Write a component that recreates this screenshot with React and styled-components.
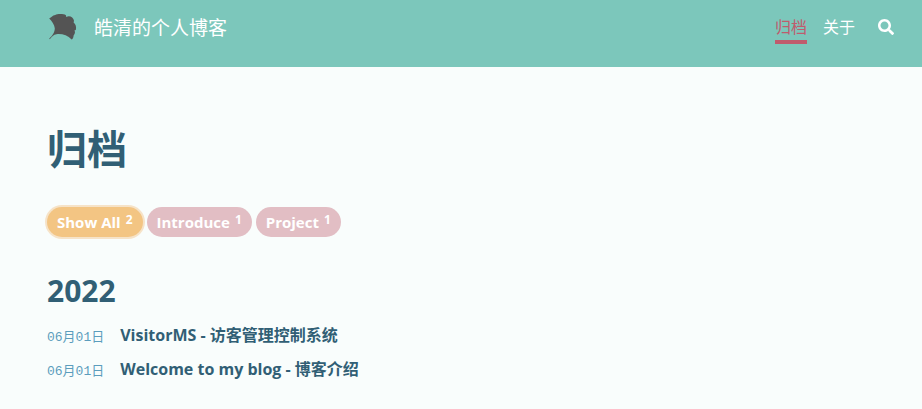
import React, { useState } from 'react';
import styled, { createGlobalStyle } from 'styled-components';
import { FaSearch } from 'react-icons/fa';

const GlobalStyle = createGlobalStyle`
  *, *::before, *::after { box-sizing: border-box; }
  body {
    margin: 0;
    background: #f9fdfc;
    color: #315f75;
    font-family: "Open Sans", "Noto Sans CJK SC", sans-serif;
    font-size: 16px;
    line-height: 24px;
  }
`;

const Header = styled.header`
  display: flex;
  align-items: flex-start;
  justify-content: space-between;
  padding: 12px 28px 23px 48px;
  background: #7cc7bb;
`;

const Brand = styled.a`
  display: flex;
  align-items: center;
  gap: 16px;
  color: #fff;
  font-size: 19px;
  line-height: 32px;
  font-weight: 400;
  text-decoration: none;
`;

const Leaf = styled.svg`
  width: 30px;
  height: 30px;
  fill: #545454;
`;

const Nav = styled.nav`
  display: flex;
  align-items: flex-start;
  gap: 16px;
  padding-top: 2px;
`;

const NavLink = styled.a`
  border-bottom: 4px solid ${({ $active }) => ($active ? '#c05b6d' : 'transparent')};
  color: ${({ $active }) => ($active ? '#c05b6d' : '#fff')};
  font-size: 16px;
  line-height: 26px;
  font-weight: 400;
  text-decoration: none;
`;

const SearchButton = styled.button`
  display: flex;
  margin: 5px 0 0 7px;
  padding: 0;
  border: 0;
  background: none;
  color: #fff;
  font-size: 16px;
  cursor: pointer;
`;

const Main = styled.main`
  padding: 54px 47px 24px;
`;

const Title = styled.h1`
  margin: 0 0 30px;
  font-size: 40px;
  line-height: 56px;
  font-weight: 700;
`;

const Tags = styled.div`
  display: flex;
  flex-wrap: wrap;
  gap: 4px;
`;

const Tag = styled.button`
  display: flex;
  gap: 5px;
  padding: 0 10px;
  border: 0;
  border-radius: 15px;
  background: ${({ $active }) => ($active ? '#f3c583' : '#e2bec4')};
  box-shadow: ${({ $active }) => ($active ? '0 0 0 2px #f6e3c8' : 'none')};
  color: #fff;
  font-family: inherit;
  font-size: 15px;
  line-height: 30px;
  font-weight: 700;
  cursor: pointer;
`;

const Count = styled.span`
  font-size: 12px;
  line-height: 26px;
  font-weight: 700;
`;

const Year = styled.h2`
  margin: 34px 0 12px;
  font-size: 30px;
  line-height: 40px;
  font-weight: 700;
`;

const Posts = styled.ul`
  display: grid;
  gap: 7px;
  margin: 0;
  padding: 0;
  list-style: none;
`;

const Post = styled.li`
  display: flex;
  align-items: baseline;
  gap: 16px;
`;

const PostDate = styled.time`
  color: #5c9dbd;
  font-family: "Liberation Mono", "Noto Sans CJK SC", monospace;
  font-size: 13px;
`;

const PostLink = styled.a`
  color: inherit;
  font-size: 16px;
  font-weight: 700;
  text-decoration: none;
`;

const tags = [
  { name: 'Show All', count: 2 },
  { name: 'Introduce', count: 1 },
  { name: 'Project', count: 1 },
];

const posts = [
  { title: 'VisitorMS - 访客管理控制系统', tag: 'Project' },
  { title: 'Welcome to my blog - 博客介绍', tag: 'Introduce' },
];

export default function App() {
  const [selected, setSelected] = useState('Show All');
  const shown = posts.filter((p) => selected === 'Show All' || p.tag === selected);

  return (
    <>
      <GlobalStyle />
      <Header>
        <Brand href="#">
          <Leaf viewBox="0 0 30 30" aria-hidden="true">
            <path d="M1.2 5.4C3.6 4.6 4.4 2.2 7.2 2C9.4 .8 15.6 .8 17.9 2.2L18.3 4.1C21 2 25.6 4 26 7.8L25.6 9.6C27.8 11 28.6 14.6 27.8 17L26.4 17.6C27.6 19.4 26.8 21 25.6 22.4C25.6 24.2 24.8 25.8 23.6 26.6C19.6 22 13.2 20.4 8.4 21.2C5.6 21.6 3.6 23.6 1.8 26.2L1.2 25.8C4.2 22.4 6.8 19.6 6.8 15.2C6.4 11 3.8 8.2 1.2 5.4Z" />
          </Leaf>
          皓清的个人博客
        </Brand>
        <Nav>
          <NavLink href="#archive" $active aria-current="page">归档</NavLink>
          <NavLink href="#about">关于</NavLink>
          <SearchButton type="button" aria-label="搜索"><FaSearch /></SearchButton>
        </Nav>
      </Header>
      <Main>
        <Title>归档</Title>
        <Tags>
          {tags.map(({ name, count }) => (
            <Tag
              key={name}
              type="button"
              $active={selected === name}
              aria-pressed={selected === name}
              onClick={() => setSelected(name)}
            >
              {name}
              <Count>{count}</Count>
            </Tag>
          ))}
        </Tags>
        <Year>2022</Year>
        <Posts>
          {shown.map(({ title }) => (
            <Post key={title}>
              <PostDate dateTime="2022-06-01">06月01日</PostDate>
              <PostLink href="#post">{title}</PostLink>
            </Post>
          ))}
        </Posts>
      </Main>
    </>
  );
}
